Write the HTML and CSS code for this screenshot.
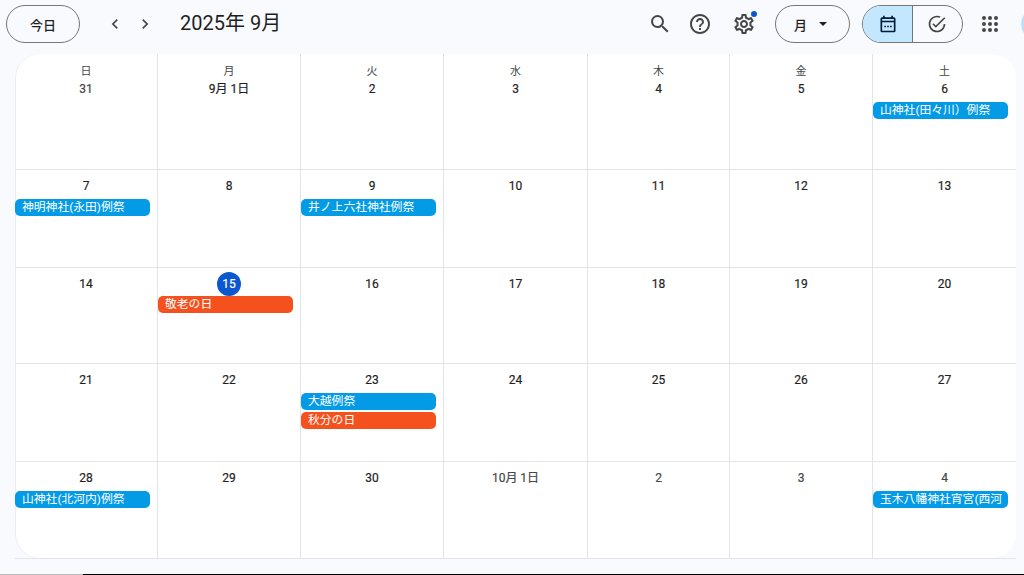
FILE: index.html
```html
<!DOCTYPE html>
<html lang="ja">
<head>
<meta charset="utf-8">
<title>カレンダー</title>
<link rel="stylesheet" href="styles.css">
</head>
<body>
<div class="page">
<header class="topbar">
  <button class="pill today">今日</button>
  <button class="nav nav-prev"><svg viewBox="0 0 24 24" width="20" height="20"><path d="M15.4 7.4 14 6l-6 6 6 6 1.4-1.4L10.8 12z"/></svg></button>
  <button class="nav nav-next"><svg viewBox="0 0 24 24" width="20" height="20"><path d="M8.6 7.4 10 6l6 6-6 6-1.4-1.4 4.6-4.6z"/></svg></button>
  <h1 class="title">2025年 9月</h1>
  <div class="spacer"></div>
  <button class="icon icon-search"><svg viewBox="0 0 24 24" width="24" height="24"><path d="M15.5 14h-.79l-.28-.27A6.471 6.471 0 0 0 16 9.5 6.5 6.5 0 1 0 9.5 16c1.61 0 3.09-.59 4.23-1.57l.27.28v.79l5 4.99L20.49 19l-4.99-5zm-6 0C7.01 14 5 11.99 5 9.5S7.01 5 9.5 5 14 7.01 14 9.5 11.99 14 9.5 14z"/></svg></button>
  <button class="icon icon-help"><svg viewBox="0 0 24 24" width="24" height="24"><path d="M11 18h2v-2h-2v2zm1-16C6.48 2 2 6.48 2 12s4.48 10 10 10 10-4.48 10-10S17.52 2 12 2zm0 18c-4.41 0-8-3.59-8-8s3.59-8 8-8 8 3.59 8 8-3.59 8-8 8zm0-14c-2.21 0-4 1.79-4 4h2c0-1.1.9-2 2-2s2 .9 2 2c0 2-3 1.75-3 5h2c0-2.25 3-2.5 3-5 0-2.21-1.79-4-4-4z"/></svg></button>
  <button class="icon icon-gear"><svg viewBox="0 0 24 24" width="24" height="24"><path d="M19.43 12.98c.04-.32.07-.64.07-.98 0-.34-.03-.66-.07-.98l2.11-1.65c.19-.15.24-.42.12-.64l-2-3.46c-.09-.16-.26-.25-.44-.25-.06 0-.12.01-.17.03l-2.49 1c-.52-.4-1.08-.73-1.69-.98l-.38-2.65C14.46 2.18 14.25 2 14 2h-4c-.25 0-.46.18-.49.42l-.38 2.65c-.61.25-1.17.59-1.69.98l-2.49-1c-.06-.02-.12-.03-.18-.03-.17 0-.34.09-.43.25l-2 3.46c-.13.22-.07.49.12.64l2.11 1.65c-.04.32-.07.65-.07.98 0 .33.03.66.07.98l-2.11 1.65c-.19.15-.24.42-.12.64l2 3.46c.09.16.26.25.44.25.06 0 .12-.01.17-.03l2.49-1c.52.4 1.08.73 1.69.98l.38 2.65c.03.24.24.42.49.42h4c.25 0 .46-.18.49-.42l.38-2.65c.61-.25 1.17-.59 1.69-.98l2.49 1c.06.02.12.03.18.03.17 0 .34-.09.43-.25l2-3.46c.12-.22.07-.49-.12-.64l-2.11-1.65zm-1.98-1.71c.04.31.05.52.05.73 0 .21-.02.43-.05.73l-.14 1.13.89.7 1.08.84-.7 1.21-1.27-.51-1.04-.42-.9.68c-.43.32-.84.56-1.25.73l-1.06.43-.16 1.13-.2 1.35h-1.4l-.19-1.35-.16-1.13-1.06-.43c-.43-.18-.83-.41-1.23-.71l-.91-.7-1.06.43-1.27.51-.7-1.21 1.08-.84.89-.7-.14-1.13c-.03-.31-.05-.54-.05-.74s.02-.43.05-.73l.14-1.13-.89-.7-1.08-.84.7-1.21 1.27.51 1.04.42.9-.68c.43-.32.84-.56 1.25-.73l1.06-.43.16-1.13.2-1.35h1.39l.19 1.35.16 1.13 1.06.43c.43.18.83.41 1.23.71l.91.7 1.06-.43 1.27-.51.7 1.21-1.07.85-.89.7.14 1.13zM12 8c-2.21 0-4 1.79-4 4s1.79 4 4 4 4-1.79 4-4-1.79-4-4-4zm0 6c-1.1 0-2-.9-2-2s.9-2 2-2 2 .9 2 2-.9 2-2 2z"/></svg><span class="dot"></span></button>
  <button class="pill view">月<span class="caret"></span></button>
  <div class="toggle">
    <div class="seg seg-on"><svg viewBox="0 0 24 24" width="20" height="20"><path d="M5 22c-1.1 0-2-.9-2-2V6c0-1.1.9-2 2-2h1V2h2v2h8V2h2v2h1c1.1 0 2 .9 2 2v14c0 1.1-.9 2-2 2H5zm0-2h14V10H5v10zM5 8h14V6H5v2zm2.500 6h2v2h-2zm3.500 0h2v2h-2zm3.500 0h2v2h-2z"/></svg></div>
    <div class="seg seg-off"><svg viewBox="0 0 24 24" width="20" height="20"><path d="M12 22C6.500 22 2 17.500 2 12S6.500 2 12 2c1.600 0 3.100.4 4.400 1l-1.500 1.500A8 8 0 1 0 20 12h2c0 5.500-4.500 10-10 10zm-1.400-5.400L6.400 12.400l1.400-1.400 2.800 2.800L20.600 3.800 22 5.200 10.600 16.600z"/></svg></div>
  </div>
  <button class="icon icon-apps"><svg viewBox="0 0 24 24" width="24" height="24"><path d="M6 8a2 2 0 1 0 0-4 2 2 0 0 0 0 4zm6 12a2 2 0 1 0 0-4 2 2 0 0 0 0 4zm-6 0a2 2 0 1 0 0-4 2 2 0 0 0 0 4zm0-6a2 2 0 1 0 0-4 2 2 0 0 0 0 4zm6 0a2 2 0 1 0 0-4 2 2 0 0 0 0 4zm4-8a2 2 0 1 0 4 0 2 2 0 0 0-4 0zm-4 2a2 2 0 1 0 0-4 2 2 0 0 0 0 4zm6 6a2 2 0 1 0 0-4 2 2 0 0 0 0 4zm0 6a2 2 0 1 0 0-4 2 2 0 0 0 0 4z"/></svg></button>
  <div class="avatar"></div>
</header>
<main class="board">
  <div class="month">
    <div class="cell"><div class="dow">日</div><div class="date muted">31</div></div>
    <div class="cell"><div class="dow">月</div><div class="date">9月 1日</div></div>
    <div class="cell"><div class="dow">火</div><div class="date">2</div></div>
    <div class="cell"><div class="dow">水</div><div class="date">3</div></div>
    <div class="cell"><div class="dow">木</div><div class="date">4</div></div>
    <div class="cell"><div class="dow">金</div><div class="date">5</div></div>
    <div class="cell"><div class="dow">土</div><div class="date">6</div><div class="event blue">山神社(田々川）例祭</div></div>

    <div class="cell"><div class="date">7</div><div class="event blue">神明神社(永田)例祭</div></div>
    <div class="cell"><div class="date">8</div></div>
    <div class="cell"><div class="date">9</div><div class="event blue">井ノ上六社神社例祭</div></div>
    <div class="cell"><div class="date">10</div></div>
    <div class="cell"><div class="date">11</div></div>
    <div class="cell"><div class="date">12</div></div>
    <div class="cell"><div class="date">13</div></div>

    <div class="cell"><div class="date">14</div></div>
    <div class="cell"><div class="date now">15</div><div class="event orange">敬老の日</div></div>
    <div class="cell"><div class="date">16</div></div>
    <div class="cell"><div class="date">17</div></div>
    <div class="cell"><div class="date">18</div></div>
    <div class="cell"><div class="date">19</div></div>
    <div class="cell"><div class="date">20</div></div>

    <div class="cell"><div class="date">21</div></div>
    <div class="cell"><div class="date">22</div></div>
    <div class="cell"><div class="date">23</div><div class="event blue">大越例祭</div><div class="event orange">秋分の日</div></div>
    <div class="cell"><div class="date">24</div></div>
    <div class="cell"><div class="date">25</div></div>
    <div class="cell"><div class="date">26</div></div>
    <div class="cell"><div class="date">27</div></div>

    <div class="cell"><div class="date">28</div><div class="event blue">山神社(北河内)例祭</div></div>
    <div class="cell"><div class="date">29</div></div>
    <div class="cell"><div class="date">30</div></div>
    <div class="cell"><div class="date muted">10月 1日</div></div>
    <div class="cell"><div class="date muted">2</div></div>
    <div class="cell"><div class="date muted">3</div></div>
    <div class="cell"><div class="date muted">4</div><div class="event blue">玉木八幡神社宵宮(西河</div></div>
  </div>
</main>
<div class="gap"></div>
<footer class="taskbar"><div class="tb-left"></div><div class="tb-right"></div></footer>
</div>
</body>
</html>
```
FILE: styles.css
```css
* { box-sizing: border-box; }
html, body { margin: 0; padding: 0; height: 575px; overflow: hidden; }
body {
  background: #f8fafd;
  color: #1f1f1f;
  font-family: Roboto, "Noto Sans CJK JP", sans-serif;
}
.page { display: flex; flex-direction: column; height: 575px; }
button { font-family: inherit; color: inherit; background: none; border: 0; padding: 0; }
svg { display: block; fill: #444746; }

.topbar { height: 54px; display: flex; align-items: flex-start; padding: 5px 0 0 6px; overflow: hidden; flex: none; }
.pill { height: 38px; border: 1px solid #747775; border-radius: 19px; font-size: 13px; font-weight: 500; display: flex; align-items: center; flex: none; }
.today { width: 74px; justify-content: center; }
.nav { width: 20px; height: 38px; display: flex; align-items: center; justify-content: center; flex: none; }
.nav-prev { margin-left: 25px; }
.nav-next { margin-left: 10px; }
.title { margin: 0 0 0 25px; font-size: 20px; font-weight: 400; line-height: 37px; white-space: nowrap; }
.spacer { flex: 1; }
.icon { width: 24px; height: 38px; display: flex; align-items: center; justify-content: center; position: relative; flex: none; }
.icon-help { margin-left: 16px; }
.icon-gear { margin-left: 20px; }
.dot { position: absolute; top: 6px; right: -1px; width: 6px; height: 6px; border-radius: 50%; background: #0b57d0; }
.view { width: 75px; margin-left: 19px; padding-left: 18px; }
.caret { margin-left: 12px; border-top: 4px solid #1f1f1f; border-left: 4px solid transparent; border-right: 4px solid transparent; }
.toggle { width: 101px; height: 38px; margin-left: 12px; border: 1px solid #747775; border-radius: 19px; display: flex; overflow: hidden; flex: none; }
.seg { flex: 1; display: flex; align-items: center; justify-content: center; }
.seg-on { flex: none; width: 50px; background: #c2e7ff; border-right: 1px solid #747775; }
.seg-on svg { fill: #001d35; }
.seg-off svg { margin-left: -2px; }
.icon-apps { margin-left: 15px; }
.avatar { width: 32px; height: 32px; margin: 3px -29px 0 19px; border-radius: 50%; background: #c4dcf5; flex: none; }

.board { margin-left: 15px; width: 1001px; border-bottom: 1px solid #e1e5ea; flex: none; }
.month {
  background: #fff;
  border-radius: 24px;
  overflow: hidden;
  box-shadow: inset 1px 0 0 #e9edf2;
  display: grid;
  grid-template-columns: 143px 143px 143px 144px 142px 143px 143px;
  grid-template-rows: 116px 98px 96px 98px 96px;
}
.cell { border-right: 1px solid #e1e5ea; border-bottom: 1px solid #e1e5ea; display: flex; flex-direction: column; align-items: center; padding-top: 9px; min-width: 0; }
.cell:nth-child(7n) { border-right: 0; }
.cell:nth-child(n+29) { border-bottom: 0; }
.cell:nth-child(-n+7) { padding-top: 11px; }
.dow { font-size: 11px; font-weight: 400; line-height: 14px; color: #444746; }
.date { font-size: 12px; font-weight: 400; line-height: 14px; height: 16px; margin-bottom: 4px; white-space: nowrap; color: #1f1f1f; -webkit-text-stroke: 0.2px #1f1f1f; }
.muted { color: #444746; -webkit-text-stroke: 0.2px #444746; }
.cell:nth-child(-n+7) .date { margin-top: 3px; margin-bottom: 4px; }
.date.now { width: 24px; height: 24px; line-height: 24px; text-align: center; border-radius: 50%; background: #0b57d0; color: #fff; -webkit-text-stroke: 0.2px #fff; margin-top: -5px; margin-bottom: 0; }
.event {
  align-self: flex-start;
  width: 135px;
  height: 17px;
  margin-bottom: 2px;
  padding-left: 7px;
  border-radius: 5px;
  color: #fff;
  font-size: 11.8px;
  font-weight: 400;
  line-height: 17px;
  white-space: nowrap;
  overflow: hidden;
}
.blue { background: #039be5; }
.orange { background: #f4511e; }
.gap { flex: 1; }
.taskbar { height: 1px; display: flex; flex: none; }
.tb-left { width: 83px; background: #b9b9b9; }
.tb-right { flex: 1; background: #000; }
```
